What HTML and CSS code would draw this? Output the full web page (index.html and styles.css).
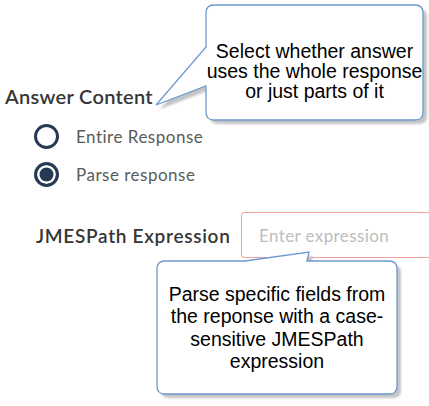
FILE: index.html
```html
<!DOCTYPE html>
<html>
<head>
<meta charset="utf-8">
<link rel="stylesheet" href="styles.css">
</head>
<body>
<div class="form">
  <h3 class="heading">Answer Content</h3>
  <div class="radios">
    <label class="radio-row"><span class="radio"></span><span class="radio-text">Entire Response</span></label>
    <label class="radio-row"><span class="radio checked"></span><span class="radio-text">Parse response</span></label>
  </div>
  <div class="expr-row">
    <span class="expr-label">JMESPath Expression</span>
    <div class="expr-input">Enter expression</div>
  </div>
</div>

<svg class="callouts" width="429" height="406" viewBox="0 0 429 406">
  <defs>
    <filter id="blur" x="-10%" y="-10%" width="120%" height="120%">
      <feGaussianBlur stdDeviation="0.8"/>
    </filter>
  </defs>
  <path class="shadow" transform="translate(4 4)" d="M214 5 H415 Q423 5 423 13 V112 Q423 120 415 120 H214 Q206 120 206 112 V86 L156 105 L206 47 V13 Q206 5 214 5 Z"/>
  <path class="bubble" d="M214 5 H415 Q423 5 423 13 V112 Q423 120 415 120 H214 Q206 120 206 112 V86 L156 105 L206 47 V13 Q206 5 214 5 Z"/>
  <path class="shadow" transform="translate(4 4)" d="M165 261 H245 L309 252 L307 261 H389 Q397 261 397 269 V386 Q397 394 389 394 H165 Q157 394 157 386 V269 Q157 261 165 261 Z"/>
  <path class="bubble" d="M165 261 H245 L309 252 L307 261 H389 Q397 261 397 269 V386 Q397 394 389 394 H165 Q157 394 157 386 V269 Q157 261 165 261 Z"/>
</svg>
<div class="note note-top">Select whether answer<br>uses the whole response<br>or just parts of it</div>
<div class="note note-bottom">Parse specific fields from<br>the reponse with a case-<br>sensitive JMESPath<br>expression</div>
</body>
</html>
```

FILE: styles.css
```css
html, body {
  margin: 0;
  padding: 0;
  background: #ffffff;
  width: 429px;
  height: 406px;
  overflow: hidden;
  position: relative;
}

.form {
  padding: 84px 0 0 5px;
  font-family: Lato, "Open Sans", sans-serif;
}

.heading {
  margin: 0;
  font-size: 20px;
  line-height: 24px;
  font-weight: 600;
  color: #363636;
  letter-spacing: 0.3px;
}

.radios {
  margin: 9px 0 0 29px;
  display: flex;
  flex-direction: column;
}

.radio-row {
  display: flex;
  align-items: center;
  height: 38px;
  gap: 17px;
}

.radio {
  box-sizing: border-box;
  width: 25px;
  height: 25px;
  border-radius: 50%;
  border: 3px solid #273a55;
  background: #fff;
}

.radio.checked {
  background: #273a55;
  box-shadow: inset 0 0 0 2.5px #fff;
}

.radio-text {
  font-size: 17px;
  letter-spacing: 0.5px;
  color: #5a5a5a;
}

.expr-row {
  margin: 19px 0 0 31px;
  display: flex;
  align-items: center;
  gap: 10px;
}

.expr-label {
  font-size: 19px;
  font-weight: 600;
  color: #363636;
  letter-spacing: 0.7px;
  width: 195px;
  white-space: nowrap;
}

.expr-input {
  box-sizing: border-box;
  flex: 1;
  height: 46px;
  border: 1px solid #f0a0a0;
  border-right: none;
  border-radius: 4px 0 0 4px;
  padding-left: 17px;
  display: flex;
  align-items: center;
  font-size: 17px;
  letter-spacing: 0.4px;
  color: #bdbdbd;
}

.callouts {
  position: absolute;
  left: 0;
  top: 0;
  pointer-events: none;
}

.shadow {
  fill: #c4c4c4;
  filter: url(#blur);
}

.bubble {
  fill: #ffffff;
  stroke: #6d9bcf;
  stroke-width: 1.3;
}

.note {
  position: absolute;
  box-sizing: border-box;
  display: flex;
  align-items: center;
  justify-content: center;
  text-align: center;
  font-family: "Liberation Sans", Arial, sans-serif;
  font-size: 19.5px;
  color: #000;
}

.note-top {
  left: 206px;
  top: 5px;
  width: 217px;
  height: 115px;
  line-height: 20px;
  padding-top: 17px;
}

.note-bottom {
  left: 157px;
  top: 261px;
  width: 240px;
  height: 133px;
  line-height: 22.5px;
}
```
